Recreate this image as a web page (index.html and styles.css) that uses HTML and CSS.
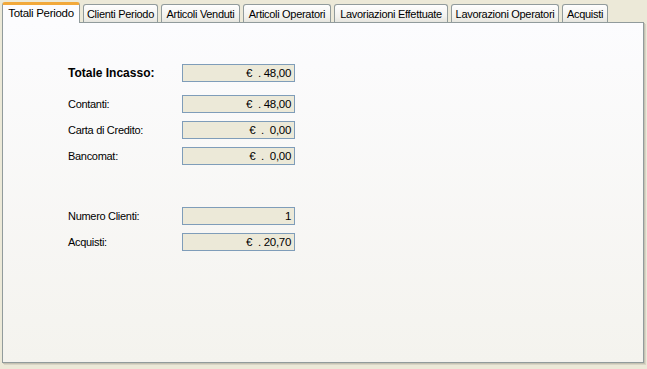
FILE: index.html
```html
<!DOCTYPE html>
<html lang="it">
<head>
  <meta charset="UTF-8">
  <title>Totali Periodo</title>
  <link rel="stylesheet" href="styles.css">
</head>
<body>
  <div class="window">
    <div class="tabs">
      <div class="tab active w-totali">Totali Periodo</div>
      <div class="tab w-clienti">Clienti Periodo</div>
      <div class="tab w-venduti">Articoli Venduti</div>
      <div class="tab w-artop">Articoli Operatori</div>
      <div class="tab w-effett">Lavoriazioni Effettuate</div>
      <div class="tab w-lavop">Lavorazioni Operatori</div>
      <div class="tab w-acquisti">Acquisti</div>
    </div>
    <div class="panel">
      <div class="row total">
        <span class="label">Totale Incasso:</span>
        <span class="field">€&nbsp;&nbsp;. 48,00</span>
      </div>
      <div class="group">
        <div class="row">
          <span class="label">Contanti:</span>
          <span class="field">€&nbsp;&nbsp;. 48,00</span>
        </div>
        <div class="row">
          <span class="label">Carta di Credito:</span>
          <span class="field">€&nbsp;&nbsp;.&nbsp;&nbsp;0,00</span>
        </div>
        <div class="row">
          <span class="label">Bancomat:</span>
          <span class="field">€&nbsp;&nbsp;.&nbsp;&nbsp;0,00</span>
        </div>
      </div>
      <div class="group lower">
        <div class="row">
          <span class="label">Numero Clienti:</span>
          <span class="field">1</span>
        </div>
        <div class="row">
          <span class="label">Acquisti:</span>
          <span class="field">€&nbsp;&nbsp;. 20,70</span>
        </div>
      </div>
    </div>
  </div>
</body>
</html>
```

FILE: styles.css
```css
* { margin: 0; padding: 0; box-sizing: border-box; }
body { font-family: 'Liberation Sans', Arial, sans-serif; font-size: 11px; letter-spacing: -0.3px; color: #000; background: #ece9d8; width: 647px; height: 369px; overflow: hidden; }

.window { padding: 2px 0 0 2px; }

/* tab strip */
.tabs { display: flex; align-items: flex-end; gap: 3px; height: 20px; position: relative; z-index: 2; }
.tab { height: 18px; padding-top: 2px; text-align: center; background: linear-gradient(#fefefe, #f1f1ed 70%, #e6e5de); border: 1px solid #919b9c; border-bottom: none; border-radius: 3px 3px 0 0; white-space: nowrap; line-height: 14px; }
.tab.active { height: 21px; margin-bottom: -1px; padding-top: 1px; background: #fcfcfe; border-top: 3px solid #f2a93b; font-size: 11.5px; }
.w-totali { width: 78px; }
.w-clienti { width: 75px; }
.w-venduti { width: 79px; }
.w-artop { width: 88px; }
.w-effett { width: 114px; }
.w-lavop { width: 108px; }
.w-acquisti { width: 46px; }

/* page */
.panel { width: 642px; height: 341px; border: 1px solid #919b9c; background: linear-gradient(#fcfcfe, #f4f3ee); box-shadow: 1px 1px 0 #c5c2b2, 2px 2px 0 #d8d5c6; padding: 41px 0 0 65px; }

.row { display: flex; align-items: center; height: 18px; }
.label { width: 114px; }
.total .label { font-weight: bold; font-size: 12px; letter-spacing: 0; }
.field { width: 113px; height: 18px; border: 1px solid #7f9db9; background: #ece9d8; text-align: right; padding: 1px 3px 0 0; line-height: 15px; font-size: 11.5px; }

.group { display: flex; flex-direction: column; gap: 8px; margin-top: 13px; }
.group.lower { margin-top: 42px; }
```
